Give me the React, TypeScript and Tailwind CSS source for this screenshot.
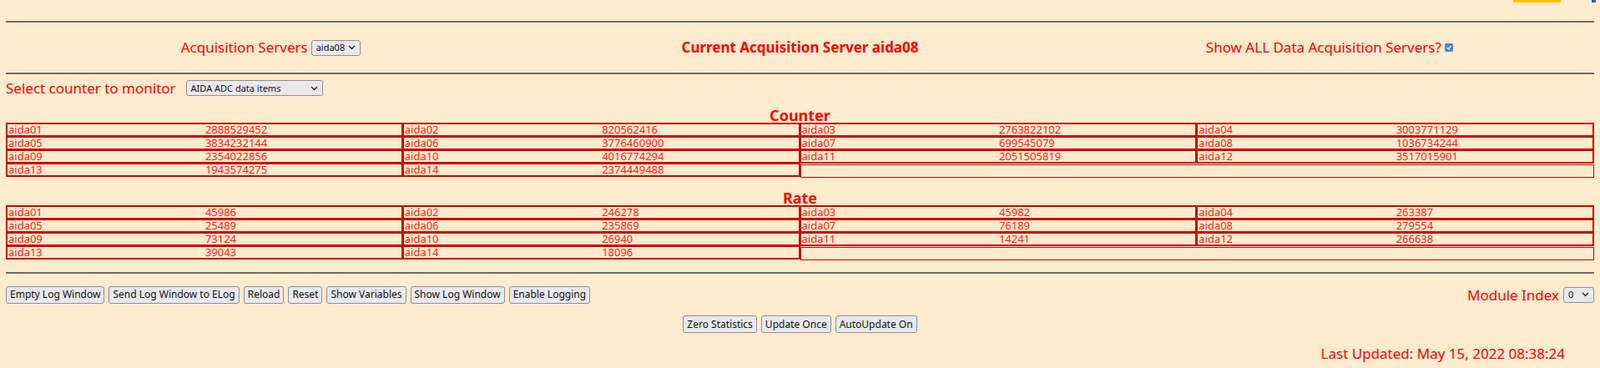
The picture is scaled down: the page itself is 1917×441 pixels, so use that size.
const serif = "font-[family-name:'DejaVu_Serif_Condensed','Liberation_Serif',serif]";
const btnFont = "font-[family-name:'DejaVu_Sans_Condensed','DejaVu_Sans',sans-serif]";

const counter: [string, string][] = [
  ["aida01", "2888529452"], ["aida02", "820562416"], ["aida03", "2763822102"], ["aida04", "3003771129"],
  ["aida05", "3834232144"], ["aida06", "3776460900"], ["aida07", "699545079"], ["aida08", "1036734244"],
  ["aida09", "2354022856"], ["aida10", "4016774294"], ["aida11", "2051505819"], ["aida12", "3517015901"],
  ["aida13", "1943574275"], ["aida14", "2374449488"],
];
const rate: [string, string][] = [
  ["aida01", "45986"], ["aida02", "246278"], ["aida03", "45982"], ["aida04", "263387"],
  ["aida05", "25489"], ["aida06", "235869"], ["aida07", "76189"], ["aida08", "279554"],
  ["aida09", "73124"], ["aida10", "26940"], ["aida11", "14241"], ["aida12", "266638"],
  ["aida13", "39043"], ["aida14", "18096"],
];

const Hr = () => <div className="mx-[7px] h-[2px] bg-[#6b6b6b]" />;

const Btn = ({ children }: { children: string }) => (
  <button className={`${btnFont} h-[21px] px-[4px] text-[12px] leading-none text-[#111] bg-[#e9e9ed] border border-[#8f8f9d] rounded-[3px]`}>
    {children}
  </button>
);

const Select = ({ value, w }: { value: string; w: string }) => (
  <div className={`${btnFont} ${w} h-[19px] inline-flex items-center justify-between px-[5px] text-[11px] text-[#111] bg-[#e9e9ed] border border-[#8f8f9d] rounded-[3px]`}>
    <span>{value}</span>
    <svg width="9" height="6" viewBox="0 0 9 6"><path d="M1 1l3.5 3.5L8 1" stroke="#222" strokeWidth="1.3" fill="none" /></svg>
  </div>
);

const DataTable = ({ title, rows }: { title: string; rows: [string, string][] }) => {
  const lines = [rows.slice(0, 4), rows.slice(4, 8), rows.slice(8, 12), rows.slice(12)];
  return (
    <div className="mx-[7px]">
      <div className="text-center font-bold text-[18px] leading-[20px] text-[#ff0000]">{title}</div>
      <div className="flex flex-col">
        {lines.map((line, i) => (
          <div key={i} className="grid grid-cols-4">
            {line.map(([n, v]) => (
              <div key={n} className="grid grid-cols-2 h-[17px] border-2 border-[#cc0000] -mt-[1px] -ml-[1px] first:ml-0 items-center text-[13px] leading-none text-[#ff1a1a]">
                <span className="pl-[1px]">{n}</span>
                <span className="pl-[1px]">{v}</span>
              </div>
            ))}
            {line.length < 4 && <div className="col-span-2 h-[16px] border border-[#cc0000] mt-[1px]" />}
          </div>
        ))}
      </div>
    </div>
  );
};

export default function App() {
  return (
    <div className={`${serif} bg-[#ffebcd] w-[1917px] h-[441px] overflow-hidden text-[#ff0000]`}>
      <div className="flex justify-end gap-[37px] pr-[5px] h-[25px]">
        <div className="w-[57px] h-[3px] bg-[#f5c400]" />
        <div className="w-[5px] h-[3px] bg-[#2a5db0]" />
      </div>
      <Hr />
      <div className="mx-[7px] grid grid-cols-3 items-center h-[60px] text-[17px]">
        <div className="flex items-center justify-center gap-[4px]">
          <span>Acquisition Servers</span>
          <Select value="aida08" w="w-[59px]" />
        </div>
        <div className="text-center font-bold">Current Acquisition Server aida08</div>
        <div className="flex items-center justify-center gap-[4px]">
          <span>Show ALL Data Acquisition Servers?</span>
          <span className="w-[10px] h-[10px] rounded-[2px] bg-[#3b87e0] flex items-center justify-center">
            <svg width="8" height="8" viewBox="0 0 8 8"><path d="M1.5 4l2 2 3-4" stroke="#fff" strokeWidth="1.3" fill="none" /></svg>
          </span>
        </div>
      </div>
      <Hr />
      <div className="mx-[7px] mt-[4px] flex items-center gap-[12px] text-[17px]">
        <span>Select counter to monitor</span>
        <Select value="AIDA ADC data items" w="w-[164px]" />
      </div>
      <div className="mt-[9px]">
        <DataTable title="Counter" rows={counter} />
      </div>
      <div className="mt-[14px]">
        <DataTable title="Rate" rows={rate} />
      </div>
      <div className="mt-[14px]"><Hr /></div>
      <div className="mx-[7px] mt-[13px] flex items-center justify-between">
        <div className="flex gap-[5px]">
          {["Empty Log Window", "Send Log Window to ELog", "Reload", "Reset", "Show Variables", "Show Log Window", "Enable Logging"].map((b) => (
            <Btn key={b}>{b}</Btn>
          ))}
        </div>
        <div className="flex items-center gap-[5px] text-[17px]">
          <span>Module Index</span>
          <Select value="0" w="w-[37px]" />
        </div>
      </div>
      <div className="mt-[12px] flex justify-center gap-[5px]">
        {["Zero Statistics", "Update Once", "AutoUpdate On"].map((b) => <Btn key={b}>{b}</Btn>)}
      </div>
      <div className="mt-[12px] pr-[42px] text-right text-[17px]">Last Updated: May 15, 2022 08:38:24</div>
      <div className="mt-[8px]"><Hr /></div>
    </div>
  );
}
